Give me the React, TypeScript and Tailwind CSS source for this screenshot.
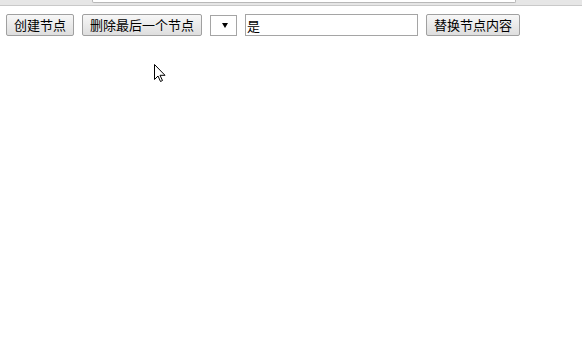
const font = { fontFamily: '"Noto Sans CJK SC", "Liberation Sans", sans-serif' };

const Btn = ({ label }: { label: string }) => (
  <button
    className="h-[22px] px-[7px] border border-[#a0a0a0] rounded-[2px] bg-gradient-to-b from-[#f7f7f7] to-[#dedede] text-[13px] leading-[20px] text-black"
    style={font}
  >
    {label}
  </button>
);

export default function App() {
  return (
    <div className="relative w-[582px] h-[342px] bg-white overflow-hidden" style={font}>
      {/* browser chrome edge */}
      <div className="h-[6px] bg-[#e6e6e6] border-b border-[#c9c9c9] flex">
        <div className="ml-[92px] w-[424px] h-[3px] bg-white border border-t-0 border-[#b8b8b8] rounded-b-[2px]" />
      </div>
      <div className="flex items-start gap-2 pl-[6px] pt-[8px]">
        <Btn label="创建节点" />
        <Btn label="删除最后一个节点" />
        <div className="w-[27px] h-[21px] mt-[1px] border border-[#a5a5a5] bg-white flex items-center justify-center">
          <svg width="6" height="5" viewBox="0 0 6 5" className="ml-[3px]">
            <path d="M0 0H6L3 5Z" fill="#000" />
          </svg>
        </div>
        <input
          defaultValue="是"
          className="w-[173px] h-[22px] border border-[#a5a5a5] bg-white px-[1px] text-[13px] text-black outline-none"
          style={font}
        />
        <Btn label="替换节点内容" />
      </div>
      {/* mouse cursor */}
      <svg className="absolute left-[154px] top-[64px]" width="13" height="19" viewBox="0 0 13 19">
        <path
          d="M0.5 0.5V15.5L4 12L6.5 17.5L8.5 16.5L6 11.3H11Z"
          fill="#fff"
          stroke="#000"
          strokeWidth="1"
          strokeLinejoin="miter"
        />
      </svg>
    </div>
  );
}
